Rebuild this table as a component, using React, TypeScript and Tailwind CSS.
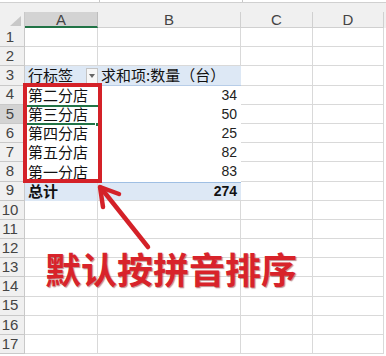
import React from "react";

const CJK = { fontFamily: '"Noto Sans CJK SC", "Noto Sans", sans-serif' };
const LAT = { fontFamily: '"Liberation Sans", Arial, sans-serif' };

function RowHead({ n, sel }: { n: number; sel?: boolean }) {
  return (
    <div
      className={`w-[25px] shrink-0 h-full flex items-center justify-center pr-[4px] border-r border-b border-[#c9c9c9] text-[15px] text-[#444] ${
        sel ? "bg-[#d3d3d3]" : "bg-[#f0f0f0]"
      }`}
      style={LAT}
    >
      {n}
    </div>
  );
}

function GridCell({ w }: { w: "a" | "b" | "c" | "d" }) {
  const cls =
    w === "a" ? "w-[73px]" : w === "b" ? "w-[143px]" : w === "c" ? "w-[72px]" : "w-[71px]";
  return <div className={`${cls} shrink-0 h-full border-r border-b border-[#d9d9d9]`} />;
}

const stores = ["第二分店", "第三分店", "第四分店", "第五分店", "第一分店"];
const nums = [34, 50, 25, 82, 83];

export default function App() {
  const rows: React.ReactNode[] = [];
  for (let r = 1; r <= 17; r++) {
    let content: React.ReactNode;
    if (r === 3) {
      content = (
        <>
          <div className="w-[73px] shrink-0 h-full bg-[#dde8f5] border-b border-[#b7cde8] flex items-center pl-[3px] relative text-[15px] text-[#111]" style={CJK}>
            行标签
            <div className="absolute left-[61px] top-[2px] w-[12px] h-[16px] bg-[#f7f7f7] border border-[#c4c4c4] flex items-center justify-center">
              <div className="w-0 h-0 border-l-[3px] border-r-[3px] border-t-[4px] border-l-transparent border-r-transparent border-t-[#666]" />
            </div>
          </div>
          <div className="w-[143px] shrink-0 h-full bg-[#dde8f5] border-b border-[#b7cde8] flex items-center pl-[3px] text-[15px] text-[#111]" style={CJK}>
            求和项:数量（台）
          </div>
          <GridCell w="c" />
          <GridCell w="d" />
        </>
      );
    } else if (r >= 4 && r <= 8) {
      content = (
        <>
          <div className="w-[73px] shrink-0 h-full bg-white flex items-center pl-[3px] text-[15px] text-[#111]" style={CJK}>
            {stores[r - 4]}
          </div>
          <div className="w-[143px] shrink-0 h-full bg-white flex items-center justify-end pr-[4px] text-[14px] text-[#222]" style={LAT}>
            {nums[r - 4]}
          </div>
          <GridCell w="c" />
          <GridCell w="d" />
        </>
      );
    } else if (r === 9) {
      content = (
        <>
          <div className="w-[73px] shrink-0 h-full bg-[#dde8f5] border-t border-[#9fbfe3] border-r border-r-[#d9d9d9] flex items-center pl-[3px] text-[15px] font-bold text-[#111]" style={CJK}>
            总计
          </div>
          <div className="w-[143px] shrink-0 h-full bg-[#dde8f5] border-t border-[#9fbfe3] border-b border-b-[#d9d9d9] flex items-center justify-end pr-[4px] text-[14px] font-bold text-[#111]" style={LAT}>
            274
          </div>
          <GridCell w="c" />
          <GridCell w="d" />
        </>
      );
    } else {
      content = (
        <>
          <GridCell w="a" />
          <GridCell w="b" />
          <GridCell w="c" />
          <GridCell w="d" />
        </>
      );
    }
    rows.push(
      <div key={r} className="flex h-[19.2px]">
        <RowHead n={r} sel={r === 5} />
        {content}
      </div>
    );
  }

  return (
    <div className="w-[386px] h-[356px] relative overflow-hidden bg-white">
      {/* formula bar remnant */}
      <div className="h-[3px] bg-white border-b border-[#d0d0d0] flex">
        <div className="w-[100px] h-full border-r border-[#c8c8c8]" />
        <div className="w-[143px] h-full border-r border-[#c8c8c8]" />
      </div>
      {/* grey band */}
      <div className="h-[9px] bg-[#f0f0f0]" />
      {/* column headers */}
      <div className="flex h-[16px] bg-[#f0f0f0] text-[15px] text-[#444]" style={LAT}>
        <div className="w-[25px] shrink-0 h-full border-r border-[#c9c9c9] relative">
          <div className="absolute right-[3px] bottom-[2px] w-0 h-0 border-l-[11px] border-t-[10px] border-l-transparent border-t-transparent border-b-0 border-r-0" style={{ borderBottom: "10px solid #c8c8c8", borderTop: "0", borderLeft: "11px solid transparent" }} />
        </div>
        <div className="w-[73px] shrink-0 h-full bg-[#d3d3d3] border-r border-[#bdbdbd] border-b-2 border-b-[#217346] flex items-center justify-center leading-none">A</div>
        <div className="w-[143px] shrink-0 h-full border-r border-b border-[#d0d0d0] flex items-center justify-center leading-none">B</div>
        <div className="w-[72px] shrink-0 h-full border-r border-b border-[#d0d0d0] flex items-center justify-center leading-none">C</div>
        <div className="w-[71px] shrink-0 h-full border-r border-b border-[#d0d0d0] flex items-center justify-center leading-none">D</div>
      </div>
      {rows}

      {/* selection on A5 */}
      <div className="absolute left-[26px] top-[105px] w-[72px] h-[20px] border-t-2 border-b-2 border-[#217346]" />
      <div className="absolute left-[95px] top-[122px] w-[5px] h-[5px] bg-[#217346] border border-white" />

      {/* red box */}
      <div className="absolute left-[23px] top-[83px] w-[79px] h-[100px] border-[4px] border-[#d42128]" />

      {/* arrow */}
      <svg className="absolute left-0 top-0" width="386" height="356" viewBox="0 0 386 356">
        <g stroke="#d42128" strokeWidth="4.5" strokeLinecap="round" strokeLinejoin="round" fill="none">
          <line x1="148" y1="247" x2="101" y2="188" />
          <polyline points="103,207 100,187 119,194" />
        </g>
      </svg>

      {/* annotation text */}
      <div
        className="absolute left-[45px] top-[250px] text-[36px] leading-none font-bold text-[#d8232a] whitespace-nowrap"
        style={{ ...CJK, textShadow: "1px 1px 1px rgba(110,0,0,0.45)" }}
      >
        默认按拼音排序
      </div>
    </div>
  );
}
